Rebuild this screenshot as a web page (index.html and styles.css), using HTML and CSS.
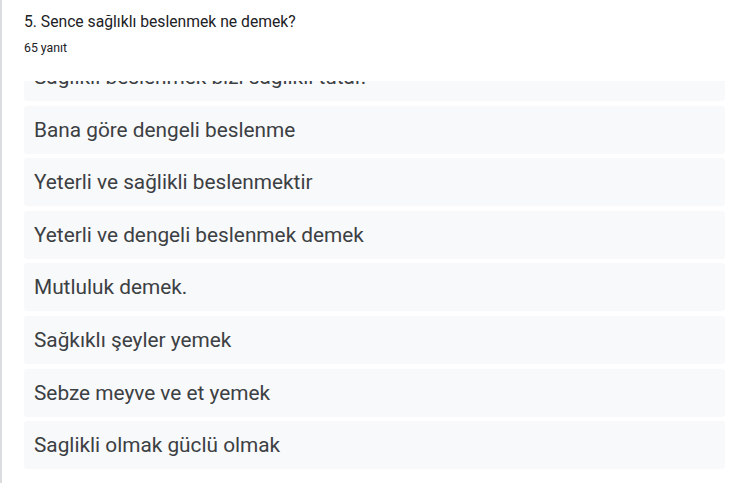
FILE: index.html
```html
<!DOCTYPE html>
<html lang="tr">
<head>
<meta charset="utf-8">
<link rel="stylesheet" href="styles.css">
</head>
<body>
<div class="panel">
  <div class="title">5. Sence sağlıklı beslenmek ne demek?</div>
  <div class="count">65 yanıt</div>
  <div class="scroller">
    <div class="list">
      <div class="item first">Sağlıklı beslenmek bizi sağlıklı tutar.</div>
      <div class="item">Bana göre dengeli beslenme</div>
      <div class="item">Yeterli ve sağlikli beslenmektir</div>
      <div class="item">Yeterli ve dengeli beslenmek demek</div>
      <div class="item">Mutluluk demek.</div>
      <div class="item">Sağkıklı şeyler yemek</div>
      <div class="item">Sebze meyve ve et yemek</div>
      <div class="item">Saglikli olmak güclü olmak</div>
    </div>
  </div>
</div>
</body>
</html>
```

FILE: styles.css
```css
html, body {
  margin: 0;
  padding: 0;
  background: #ffffff;
}
body {
  font-family: Roboto, "Liberation Sans", Arial, sans-serif;
  color: #202124;
}
.panel {
  height: 483px;
  border-left: 2px solid #dadce0;
  box-sizing: border-box;
  padding: 0 0 0 22px;
  overflow: hidden;
}
.title {
  font-size: 15.7px;
  line-height: 20px;
  padding-top: 12px;
}
.count {
  font-size: 12.3px;
  line-height: 16px;
  margin-top: 8px;
}
.scroller {
  margin-top: 25px;
  height: 402px;
  overflow: hidden;
  width: 701px;
}
.list {
  display: flex;
  flex-direction: column;
  gap: 4.6px;
  margin-top: -28px;
}
.item {
  height: 48px;
  background: #f8f9fa;
  border-radius: 4px;
  box-shadow: 0 0 1px rgba(0,0,0,0.04);
  display: flex;
  align-items: center;
  padding-left: 10px;
  font-size: 20.8px;
  color: #3c4043;
  flex-shrink: 0;
  white-space: nowrap;
}
```
